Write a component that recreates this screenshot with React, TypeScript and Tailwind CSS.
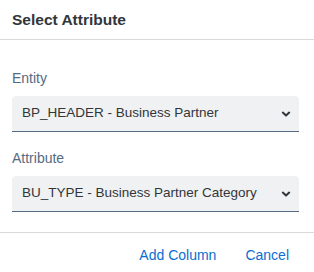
import React from "react";

const font = { fontFamily: '"Liberation Sans", Arial, sans-serif' };

const Chevron = () => (
  <svg width="10" height="10" viewBox="0 0 10 10" className="text-[#32363a]">
    <path d="M1.8 3.6 L5 6.6 L8.2 3.6" fill="none" stroke="currentColor" strokeWidth="2" strokeLinecap="round" strokeLinejoin="round" />
  </svg>
);

const SelectBox: React.FC<{ value: string }> = ({ value }) => (
  <div className="h-9 flex items-center justify-between pl-[10px] pr-[8px] bg-[#eff1f2] rounded-t border-b border-[#556b82] text-[13.5px] text-[#32363a]">
    <span>{value}</span>
    <Chevron />
  </div>
);

export default function App() {
  return (
    <div className="w-[314px] h-[272px] bg-white overflow-hidden" style={font}>
      <div className="h-[40px] px-3 flex items-center border-b border-[#d9d9d9]">
        <h1 className="text-[15.5px] font-bold text-[#32363a]">Select Attribute</h1>
      </div>
      <div className="pt-[28px] pb-[20px] pl-3 pr-[15px] border-b border-[#d9d9d9]">
        <div className="text-[14px] leading-5 text-[#556b82] mb-2">Entity</div>
        <SelectBox value="BP_HEADER - Business Partner" />
        <div className="text-[14px] leading-5 text-[#556b82] mt-4 mb-2">Attribute</div>
        <SelectBox value="BU_TYPE - Business Partner Category" />
      </div>
      <div className="h-[44px] flex items-center justify-end gap-[29px] pr-[25px] text-[14px] text-[#0a6ed1]">
        <button>Add Column</button>
        <button>Cancel</button>
      </div>
    </div>
  );
}
